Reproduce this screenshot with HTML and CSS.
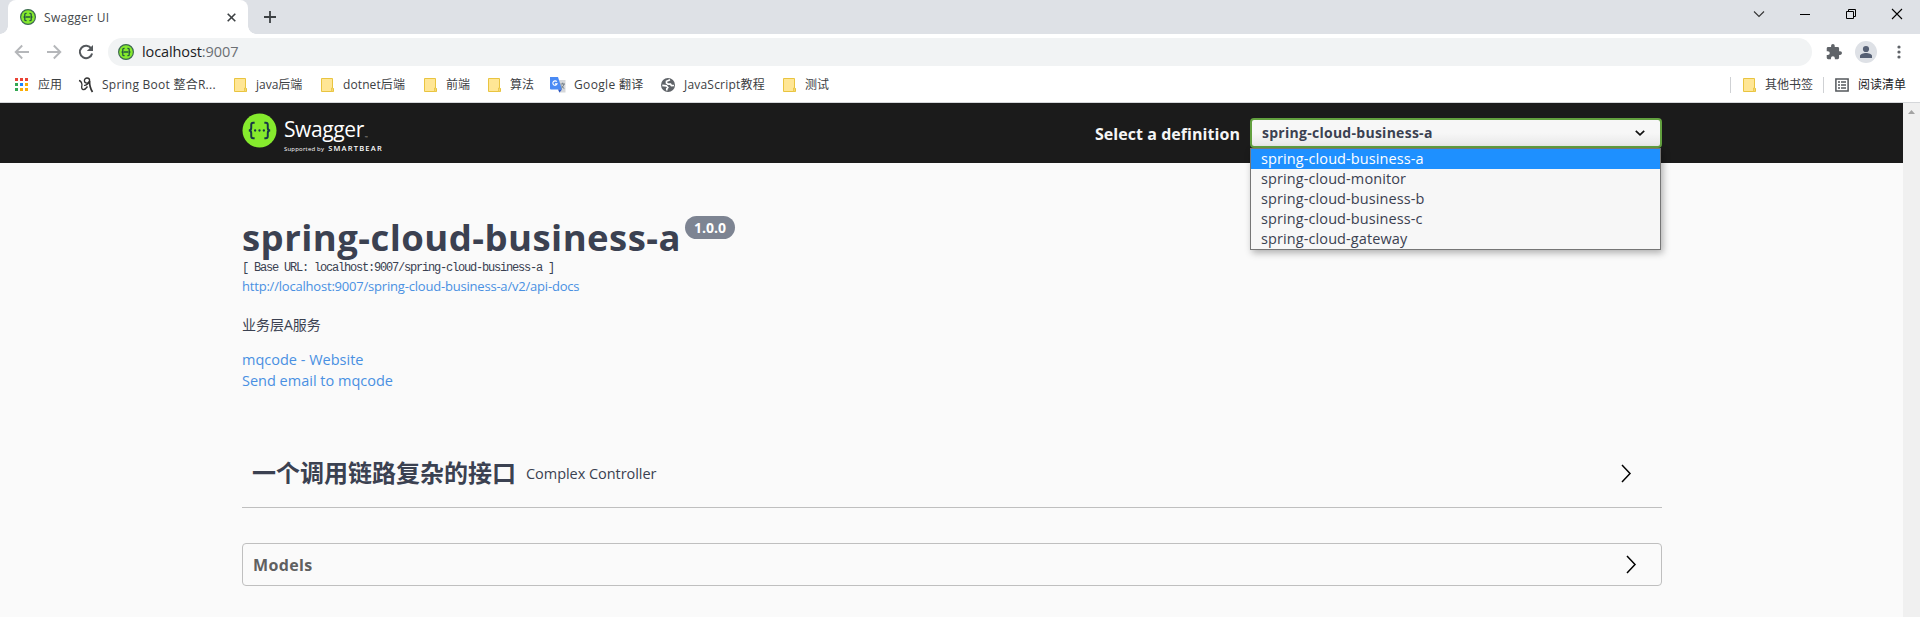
FILE: index.html
```html
<!DOCTYPE html>
<html lang="zh-CN">
<head>
<meta charset="utf-8">
<title>Swagger UI</title>
<link rel="stylesheet" href="styles.css">
</head>
<body>
<svg width="0" height="0" class="defs">
  <symbol id="swagger" viewBox="0 0 16 16"><circle cx="8" cy="8" r="7.4" fill="#85ea2d" stroke="#3d6a52" stroke-width="1.2"/><path d="M6.600 4.300H5.900q-1.100 0-1.100 1v1.500q0 1.200-1.200 1.200q1.200 0 1.200 1.200v1.500q0 1 1.100 1h.7M9.400 4.300h.7q1.100 0 1.100 1v1.500q0 1.200 1.200 1.200q-1.200 0-1.200 1.200v1.500q0 1-1.100 1h-.7M5.500 8h5" fill="none" stroke="#24583f" stroke-width="1.300"/></symbol>
  <symbol id="folder" viewBox="0 0 16 16"><path d="M2.500 1.500h11v10h1v3h-12z" fill="#ffe695" stroke="#e9c440"/><path d="M12.500 14.500v-3.500h1.500v3.500z" fill="#ffe695" stroke="#e9c440" stroke-width=".8"/></symbol>
</svg>
<header class="browser">
  <div class="tabs">
    <div class="tab">
      <svg class="i16"><use href="#swagger"/></svg>
      <span class="tab-title">Swagger UI</span>
      <svg class="tab-close" viewBox="0 0 9 9"><path d="M.7.7l7.600 7.600M8.300.7L.7 8.300" stroke="#3c4043" stroke-width="1.600"/></svg>
    </div>
    <svg class="plus" viewBox="0 0 12 12"><path d="M6 0v12M0 6h12" stroke="#3c4043" stroke-width="1.800"/></svg>
    <div class="window-buttons">
      <svg width="12" height="12" viewBox="0 0 12 12"><path d="M1 3.500l5 5 5-5" fill="none" stroke="#333" stroke-width="1.100"/></svg>
      <svg width="12" height="12" viewBox="0 0 12 12"><path d="M1 6.500h10" stroke="#000"/></svg>
      <svg width="12" height="12" viewBox="0 0 12 12"><path d="M1.500 3.500h7v7h-7zM3.500 3.500v-2h7v7h-2" fill="none" stroke="#000"/></svg>
      <svg width="12" height="12" viewBox="0 0 12 12"><path d="M1 1l10 10M11 1L1 11" stroke="#000" stroke-width="1.100"/></svg>
    </div>
  </div>
  <div class="toolbar">
    <svg class="nav" width="16" height="16" viewBox="0 0 16 16"><path d="M15 8H2M8.200 1.500L1.700 8l6.500 6.500" fill="none" stroke="#b5b7ba" stroke-width="1.900"/></svg>
    <svg class="nav" width="16" height="16" viewBox="0 0 16 16"><path d="M1 8h13M7.800 1.500L14.300 8l-6.500 6.500" fill="none" stroke="#b5b7ba" stroke-width="1.900"/></svg>
    <svg class="nav" width="16" height="16" viewBox="0 0 16 16"><path d="M13.300 4.600A6.200 6.200 0 1 0 14.100 9.400" fill="none" stroke="#54585c" stroke-width="2"/><path d="M15 .9v6.200H8.800z" fill="#54585c"/></svg>
    <div class="address">
      <svg class="i16"><use href="#swagger"/></svg>
      <span class="url">localhost<span class="port">:9007</span></span>
    </div>
    <svg class="puzzle" width="16" height="16" viewBox="1 1 22 22"><path fill="#5f6368" d="M20.500 11H19V7a2 2 0 0 0-2-2h-4V3.500a2.500 2.500 0 0 0-5 0V5H4a2 2 0 0 0-2 2v3.800h1.500a2.700 2.700 0 0 1 0 5.400H2V20a2 2 0 0 0 2 2h3.800v-1.500a2.700 2.700 0 0 1 5.400 0V22H17a2 2 0 0 0 2-2v-4h1.500a2.500 2.500 0 0 0 0-5z"/></svg>
    <svg class="avatar" width="22" height="22" viewBox="0 0 22 22"><circle cx="11" cy="11" r="11" fill="#dee1e6"/><circle cx="11" cy="8" r="3.100" fill="#566074"/><path d="M5 17v-2c0-2 3.500-3 6-3s6 1 6 3v2z" fill="#566074"/></svg>
    <svg class="dots" width="4" height="14" viewBox="0 0 4 14"><g fill="#5f6368"><circle cx="2" cy="2" r="1.600"/><circle cx="2" cy="7" r="1.600"/><circle cx="2" cy="12" r="1.600"/></g></svg>
  </div>
  <div class="bookmarks">
    <div class="bookmark-list">
      <div class="bm"><svg class="i16" viewBox="0 0 16 16"><path fill="#ea4335" d="M1 1h3v3H1zM6 1h3v3H6zM11 1h3v3h-3z"/><path fill="#34a853" d="M1 6h3v3H1zM1 11h3v3H1z"/><path fill="#1a84ff" d="M6 6h3v3H6z"/><path fill="#fbad05" d="M11 6h3v3h-3zM6 11h3v3H6zM11 11h3v3h-3z"/></svg><span>应用</span></div>
      <div class="bm"><svg class="i16" viewBox="0 0 16 16"><g fill="none" stroke="#333"><circle cx="9" cy="3.600" r="2.600" stroke-width="1.300"/><path d="M1 3.500q2.500.5 3 4.500M4 8q-1 4 1 4.500t4.500-3" stroke-width="1.300"/><path d="M6 8.500q4-.5 5.500-4.500" stroke-width="1.200"/><path d="M11.600 4q-.3 6 2.900 11" stroke-width="1.700"/></g></svg><span class="t-spring">Spring Boot 整合R...</span></div>
      <div class="bm"><svg class="i16"><use href="#folder"/></svg><span>java后端</span></div>
      <div class="bm"><svg class="i16"><use href="#folder"/></svg><span class="t-dotnet">dotnet后端</span></div>
      <div class="bm"><svg class="i16"><use href="#folder"/></svg><span>前端</span></div>
      <div class="bm"><svg class="i16"><use href="#folder"/></svg><span>算法</span></div>
      <div class="bm"><svg class="i16" viewBox="0 0 16 16"><path d="M7 3h8.500v12.500H9z" fill="#d5d7da"/><path d="M0 0h8l4 12.500H1q-1 0-1-1z" fill="#4a8af4"/><path d="M8 12.500h4l-2.500 3z" fill="#2a56c6"/><path d="M6.800 4.700a2.200 2.200 0 1 0 .3 2.200H5" fill="none" stroke="#fff" stroke-width="1.100"/><path d="M10.500 7h4.500M12.700 5.700V7M14 7q-.7 3-3 4.500M11.300 8.500q1 2 3 3" fill="none" stroke="#6b7780" stroke-width=".9"/></svg><span class="t-google">Google 翻译</span></div>
      <div class="bm"><svg class="i16" viewBox="0 0 16 16"><circle cx="8" cy="8" r="7" fill="#5f6368"/><path d="M10 2.800L6.500 4.300v1.700l1.500 1.200h2.500l1 1.500 2.500-.2M2.300 8.300l4 .5 1.500 1.700-1 1.200v1.800" fill="none" stroke="#fff" stroke-width="1.700"/></svg><span class="t-js">JavaScript教程</span></div>
      <div class="bm"><svg class="i16"><use href="#folder"/></svg><span>测试</span></div>
    </div>
    <div class="bookmark-end">
      <div class="bm other"><svg class="i16"><use href="#folder"/></svg><span>其他书签</span></div>
      <div class="bm reading"><svg class="i16" viewBox="0 0 16 16"><path d="M1.900 1.900h12.200v12.200H1.900z" fill="none" stroke="#54585c" stroke-width="1.500"/><path d="M4 5h2M4 8h2M4 11h2M7 5h5M7 8h5M7 11h5" stroke="#54585c" stroke-width="1.400"/></svg><span>阅读清单</span></div>
    </div>
  </div>
</header>
<div class="viewport">
  <main class="page">
    <div class="topbar">
      <div class="logo">
        <svg class="logo-mark" viewBox="0 0 36 36"><circle cx="18" cy="18" r="17.500" fill="#85ea2d"/><g fill="none" stroke="#173647" stroke-width="2"><path d="M13 10h-1.500q-2 0-2 2v3.500q0 2.500-2.500 2.500q2.500 0 2.500 2.500V24q0 2 2 2H13M23 10h1.500q2 0 2 2v3.500q0 2.500 2.500 2.500q-2.500 0-2.500 2.500V24q0 2-2 2H23"/></g><g fill="#173647"><circle cx="13.500" cy="18" r="1.200"/><circle cx="18" cy="18" r="1.200"/><circle cx="22.500" cy="18" r="1.200"/></g></svg>
        <div class="logo-text"><div class="logo-name">Swagger<span class="tm">™</span></div><div class="logo-sub"><span class="sup">Supported by</span><span class="smart">SMARTBEAR</span></div></div>
      </div>
      <div class="definition">
        <span class="def-label">Select a definition</span>
        <div class="select">
          <span class="select-value">spring-cloud-business-a</span>
          <svg width="10" height="6" viewBox="0 0 10 6"><path d="M.8.8L5 4.800 9.200.8" fill="none" stroke="#111" stroke-width="1.700"/></svg>
          <ul class="options">
            <li class="active">spring-cloud-business-a</li>
            <li>spring-cloud-monitor</li>
            <li>spring-cloud-business-b</li>
            <li>spring-cloud-business-c</li>
            <li>spring-cloud-gateway</li>
          </ul>
        </div>
      </div>
    </div>
    <section class="info">
      <div class="title-row"><h1>spring-cloud-business-a</h1><span class="version">1.0.0</span></div>
      <div class="base">[ Base URL: localhost:9007/spring-cloud-business-a ]</div>
      <a class="docs">http://localhost:9007/spring-cloud-business-a/v2/api-docs</a>
      <p class="desc">业务层A服务</p>
      <a class="contact">mqcode - Website</a>
      <a class="contact">Send email to mqcode</a>
    </section>
    <section class="tag">
      <h2>一个调用链路复杂的接口</h2><span class="tag-desc">Complex Controller</span>
      <svg class="chev" width="11" height="19" viewBox="0 0 11 19"><path d="M1 1l8 8.500-8 8.500" fill="none" stroke="#000" stroke-width="1.500"/></svg>
    </section>
    <section class="models">
      <h3>Models</h3>
      <svg class="chev" width="11" height="19" viewBox="0 0 11 19"><path d="M1 1l8 8.500-8 8.500" fill="none" stroke="#000" stroke-width="1.500"/></svg>
    </section>
  </main>
  <div class="scrollbar"><svg width="7" height="4" viewBox="0 0 7 4"><path d="M0 4L3.500 0 7 4z" fill="#a3a3a3"/></svg></div>
</div>
</body>
</html>
```
FILE: styles.css
```css
* { box-sizing: border-box; }
body { margin: 0; height: 617px; overflow: hidden; display: flex; flex-direction: column; font-family: "Open Sans", "Noto Sans CJK SC", sans-serif; color: #3b4151; background: #fafafa; }
svg { display: block; flex: none; }
.defs { position: absolute; }
span, a, h1, h2, h3, li { white-space: nowrap; }
.i16 { width: 16px; height: 16px; }

.browser { height: 103px; flex: none; background: #fff; border-bottom: 1px solid #d5d7da; }
.tabs { height: 34px; background: #dee1e6; display: flex; align-items: center; padding-left: 8px; }
.tab { width: 240px; height: 34px; background: #fff; border-radius: 8px 8px 0 0; display: flex; align-items: center; padding: 0 12px; position: relative; }
.tab::before, .tab::after { content: ""; position: absolute; bottom: 0; width: 8px; height: 8px; }
.tab::before { left: -8px; background: radial-gradient(circle at 0 0, transparent 7.5px, #fff 8px); }
.tab::after { right: -8px; background: radial-gradient(circle at 100% 0, transparent 7.5px, #fff 8px); }
.tab-title { margin-left: 8px; font-size: 12px; color: #45494d; flex: 1; letter-spacing: .3px; }
.tab-close { width: 9px; height: 9px; }
.plus { width: 12px; height: 12px; margin-left: 16px; }
.window-buttons { margin-left: auto; display: flex; gap: 34px; padding: 0 17px 6px 0; }
.toolbar { height: 36px; display: flex; align-items: center; padding: 0 0 0 14px; }
.nav { margin-right: 16px; }
.address { width: 1704px; height: 28px; margin-left: -2px; border-radius: 14px; background: #f1f3f4; display: flex; align-items: center; padding-left: 10px; }
.url { margin: -2px 0 0 8px; font-size: 14.500px; color: #202124; letter-spacing: -.1px; }
.port { color: #6b6f73; }
.puzzle { margin-left: 14px; }
.avatar { margin-left: 13px; }
.dots { margin-left: 20px; }
.bookmarks { height: 30px; display: flex; justify-content: space-between; align-items: center; font-size: 12px; color: #3c4043; padding: 0 14px; }
.bookmark-list { display: grid; grid-template-columns: 64px 154px 87px 103px 64px 64px 110px 121px 60px; }
.bm { display: flex; align-items: center; gap: 8px; height: 16px; line-height: 16px; }
.t-spring { letter-spacing: .25px; }
.t-dotnet { letter-spacing: .1px; }
.t-google { letter-spacing: .35px; }
.t-js { letter-spacing: .2px; }
.bookmark-end { display: flex; }
.other { border-left: 1px solid #cfd1d4; padding-left: 10px; width: 93px; }
.reading { border-left: 1px solid #cfd1d4; padding-left: 10px; color: #202124; }

.viewport { flex: 1; display: flex; }
.page { flex: 1; }
.scrollbar { width: 17px; background: #f0f0f0; display: flex; justify-content: center; padding-top: 7px; }
.topbar { height: 60px; background: #1b1b1b; display: flex; justify-content: space-between; align-items: flex-start; padding: 0 241px 0 242px; }
.logo { display: flex; padding-top: 10px; color: #fff; }
.logo-mark { width: 35px; height: 35px; }
.logo-text { margin-left: 7px; }
.logo-name { font-size: 21px; line-height: 26px; padding-top: 3px; letter-spacing: -.4px; display: flex; align-items: flex-end; }
.tm { font-size: 4px; line-height: 8px; margin-left: 1px; color: #aaa; }
.logo-sub { display: flex; align-items: baseline; gap: 4px; line-height: 9px; padding-top: 2px; }
.sup { font-size: 6px; letter-spacing: .2px; }
.smart { font-size: 7.500px; font-weight: 600; letter-spacing: 1.200px; }
.definition { display: flex; padding-top: 15px; align-items: center; }
.def-label { font-size: 16px; font-weight: 700; color: #f5f5f5; margin: 2px 10px 0 0; letter-spacing: .05px; }
.select { position: relative; width: 412px; height: 30px; background: linear-gradient(#f7f7f7 50%, #e8e8e8); border: 2px solid #62a03f; border-radius: 4px; display: flex; align-items: center; justify-content: space-between; padding: 0 15px 1px 10px; }
.select-value { font-size: 14px; font-weight: 700; letter-spacing: .27px; }
.options { position: absolute; left: -2px; top: 28px; width: 411px; margin: 0; padding: 0; list-style: none; background: #f7f7f7; border: 1px solid #767676; box-shadow: 2px 3px 7px rgba(0,0,0,.3); z-index: 2; }
.options li { height: 20px; line-height: 20px; padding-left: 10px; font-size: 14.500px; letter-spacing: .1px; }
.options .active { background: #1e90ff; color: #fff; }

.info { height: 269px; padding: 53px 0 0 242px; display: flex; flex-direction: column; align-items: flex-start; }
.title-row { display: flex; height: 43px; }
h1 { margin: 0; font-size: 36.500px; line-height: 42px; font-weight: 700; letter-spacing: .45px; }
.version { margin-left: 4px; width: 50px; height: 23px; border-radius: 12px; background: #7d8492; color: #fff; font-size: 14px; line-height: 23px; font-weight: 700; text-align: center; }
.base { font-family: "Liberation Mono", monospace; font-size: 12px; letter-spacing: -1.200px; line-height: 18px; white-space: pre; }
a { color: #4990e2; }
.docs { font-size: 13px; line-height: 18px; letter-spacing: -.2px; }
.desc { margin: 19px 0 13px; font-size: 14px; line-height: 22px; }
.contact { font-size: 14.500px; line-height: 21px; letter-spacing: 0; }
.tag { margin: 0 241px 0 242px; height: 76px; border-bottom: 1px solid #bfbfbf; display: flex; align-items: center; padding: 7px 30px 0 10px; }
h2 { margin: 0; font-size: 24px; line-height: 30px; font-weight: 700; }
.tag-desc { margin-left: 10px; font-size: 14.500px; letter-spacing: -.05px; }
.chev { margin-left: auto; }
.models { margin: 35px 241px 0 242px; height: 43px; border: 1px solid #bfbfbf; border-radius: 4px; display: flex; align-items: center; padding: 0 24px 0 10px; }
h3 { margin: 0; font-size: 16px; font-weight: 700; color: #606060; letter-spacing: .35px; }
```
